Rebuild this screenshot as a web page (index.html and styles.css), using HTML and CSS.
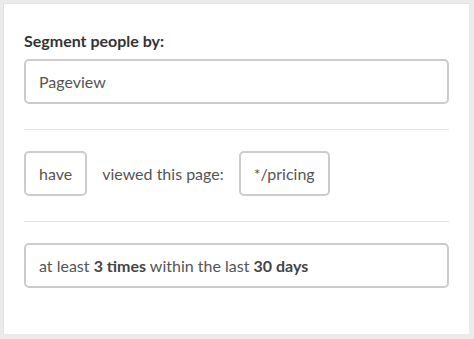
FILE: index.html
```html
<!DOCTYPE html>
<html lang="en">

<head>
    <meta charset="UTF-8">
    <meta name="viewport" content="width=device-width, initial-scale=1.0">
    <title>segment</title>
    <link rel="stylesheet" href="styles.css">
</head>

<body>

    <div class="card">
        <div class="section">
            <p class="label">Segment people by:</p>
            <div class="field"><span>Pageview</span></div>
        </div>

        <div class="section">
            <div class="row">
                <div class="field"><span>have</span></div>
                <p class="text">viewed this page:</p>
                <div class="field"><span>*/pricing</span></div>
            </div>
        </div>

        <div class="section">
            <div class="field"><span>at least <b>3 times</b> within the last <b>30 days</b></span></div>
        </div>
    </div>

</body>

</html>
```

FILE: styles.css
```css
* {
    margin: 0;
    padding: 0;
    box-sizing: border-box;
}

body {
    background-color: #ebebeb;
    font-family: Lato, "Liberation Sans", sans-serif;
    padding: 3px 5px 5px 3px;
}

.card {
    background-color: #fff;
    border-top: 1px solid #e2e2e2;
    border-left: 1px solid #e2e2e2;
    height: 331px;
    padding: 27px 20px 0 20px;
}

.section {
    padding-bottom: 25px;
    margin-bottom: 21px;
    border-bottom: 1px solid #e6e6e6;
}

.section:last-child {
    border-bottom: 0;
}

.label {
    font-size: 16px;
    font-weight: bold;
    color: #333;
    margin-bottom: 9px;
}

.row {
    display: flex;
    align-items: center;
    gap: 15px;
}

.field {
    border: 2px solid #ccc;
    border-radius: 5px;
    height: 45px;
    padding: 0 13px;
    display: flex;
    align-items: center;
    font-size: 16px;
    color: #555;
}

.field b {
    color: #444;
}

.text {
    font-size: 16px;
    color: #555;
}
```
